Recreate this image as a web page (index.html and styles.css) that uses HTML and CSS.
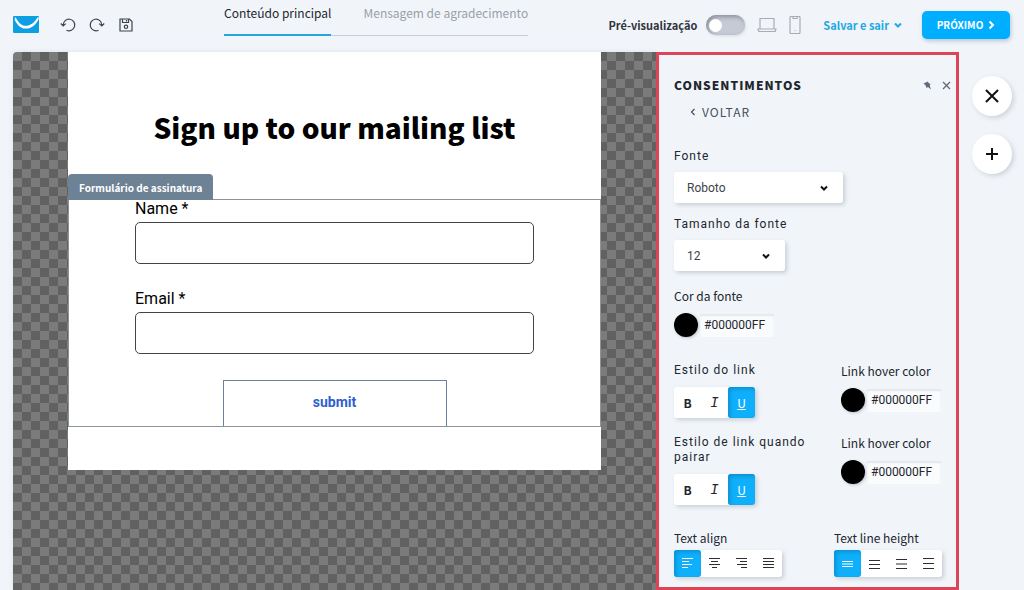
FILE: index.html
```
<!DOCTYPE html>
<html lang="pt-BR">
<head>
    <meta charset="UTF-8">
    <meta name="viewport" content="width=device-width, initial-scale=1.0">
    <title>Editor de formulário</title>
    <link rel="stylesheet" href="styles.css">
</head>
<body>

<header class="topbar">
    <a class="logo" href="#" aria-label="Início">
        <svg width="26" height="18" viewBox="0 0 26 18">
            <rect width="26" height="17" rx="1" fill="#0d9fe3"/>
            <path d="M2.500 1C6 8 9 9.800 13 9.800S21 7 25 1L26 2.500C22 10.500 17.500 12.600 13 12.600S5 10.500 1.500 3.500Z" fill="#fff"/>
        </svg>
    </a>
    <div class="tools">
        <button type="button" aria-label="Desfazer">
            <svg width="16" height="16" viewBox="0 0 16 16"><path d="M3.200 9V8A5.800 5.800 0 1 1 6.500 13.200M.8 6.500 3.200 9l2.600-2.400"/></svg>
        </button>
        <button type="button" aria-label="Refazer">
            <svg width="16" height="16" viewBox="0 0 16 16"><path d="M12.800 9V8A5.800 5.800 0 1 0 9.500 13.200M15.200 6.500 12.800 9l-2.600-2.400"/></svg>
        </button>
        <button type="button" aria-label="Salvar">
            <svg width="16" height="16" viewBox="0 0 16 16"><path d="M2 2h9.500L14 4.500V14H2ZM4.500 2v3.500h6V2M8.500 3v1.500"/><circle cx="8" cy="9.800" r="1.700"/></svg>
        </button>
    </div>
    <nav class="tabs">
        <a class="tab active" href="#">Conteúdo principal</a>
        <a class="tab" href="#">Mensagem de agradecimento</a>
    </nav>
    <div class="actions">
        <label class="preview-label" for="preview">Pré-visualização</label>
        <input class="switch" type="checkbox" id="preview">
        <button class="device" type="button" aria-label="Computador">
            <svg width="20" height="16" viewBox="0 0 20 16"><path d="M3 11.500V1.500h14v10M1 12h18l-.8 2.500H1.800Z"/></svg>
        </button>
        <button class="device" type="button" aria-label="Celular">
            <svg width="12" height="18" viewBox="0 0 12 18"><rect x="1" y=".5" width="10" height="17" rx="1"/><path d="M4 1v1.500h4V1M5.500 14.500h1"/></svg>
        </button>
        <button class="save-exit" type="button">Salvar e sair
            <svg width="8" height="6" viewBox="0 0 8 6"><path d="M1 1.500 4 4.500l3-3"/></svg>
        </button>
        <button class="next" type="button">PRÓXIMO
            <svg width="7" height="10" viewBox="0 0 7 10"><path d="M1.500 1.500 5 5 1.500 8.500"/></svg>
        </button>
    </div>
</header>

<main class="workspace">
    <section class="canvas">
        <div class="page">
            <h1>Sign up to our mailing list</h1>
            <div class="block">
                <span class="block-tag">Formulário de assinatura</span>
                <form class="signup">
                    <label for="name">Name *</label>
                    <input type="text" id="name">
                    <label for="email">Email *</label>
                    <input type="email" id="email">
                    <button type="submit">submit</button>
                </form>
            </div>
        </div>
    </section>

    <aside class="panel">
        <div class="panel-head">
            <h2>CONSENTIMENTOS</h2>
            <button type="button" aria-label="Fixar">
                <svg width="9" height="9" viewBox="0 0 9 9"><path d="M.5 2.500 5 .5l.5 1.500 2 1-.8 1.500 1.300 4-3-2.500-1.500 1-.8-2.500Z" fill="#5f6a7d"/></svg>
            </button>
            <button type="button" aria-label="Fechar">
                <svg width="9" height="9" viewBox="0 0 9 9"><path d="m1 1 7 7M8 1 1 8" stroke="#5f6a7d" stroke-width="1.300"/></svg>
            </button>
        </div>
        <button class="back" type="button">
            <svg width="6" height="8" viewBox="0 0 6 8"><path d="M4.500 1 1.500 4l3 3"/></svg>
            VOLTAR
        </button>

        <div class="field field-font">
            <label class="wide" for="fonte">Fonte</label>
            <div class="select select-lg">
                <select id="fonte"><option>Roboto</option><option>Lato</option></select>
                <svg width="8" height="6" viewBox="0 0 8 6"><path d="M1 1.500 4 4.500l3-3"/></svg>
            </div>
        </div>
        <div class="field field-size">
            <label class="wide" for="tamanho">Tamanho da fonte</label>
            <div class="select select-sm">
                <select id="tamanho"><option>12</option><option>14</option></select>
                <svg width="8" height="6" viewBox="0 0 8 6"><path d="M1 1.500 4 4.500l3-3"/></svg>
            </div>
        </div>
        <div class="field field-color">
            <label for="cor">Cor da fonte</label>
            <div class="color"><span class="swatch"></span><input type="text" id="cor" value="#000000FF"></div>
        </div>

        <div class="row">
            <div class="field">
                <span class="wide" id="estilo">Estilo do link</span>
                <div class="group" role="group" aria-labelledby="estilo">
                    <button type="button" class="bold">B</button>
                    <button type="button" class="italic">I</button>
                    <button type="button" class="underline on">U</button>
                </div>
            </div>
            <div class="field">
                <label for="hover1">Link hover color</label>
                <div class="color"><span class="swatch"></span><input type="text" id="hover1" value="#000000FF"></div>
            </div>
        </div>

        <div class="row row-hover">
            <div class="field">
                <span class="wide" id="estilo2">Estilo de link quando pairar</span>
                <div class="group" role="group" aria-labelledby="estilo2">
                    <button type="button" class="bold">B</button>
                    <button type="button" class="italic">I</button>
                    <button type="button" class="underline on">U</button>
                </div>
            </div>
            <div class="field">
                <label for="hover2">Link hover color</label>
                <div class="color"><span class="swatch"></span><input type="text" id="hover2" value="#000000FF"></div>
            </div>
        </div>

        <div class="row row-text">
            <div class="field">
                <span id="align">Text align</span>
                <div class="group" role="group" aria-labelledby="align">
                    <button type="button" class="on" aria-label="Esquerda"><svg width="11" height="11" viewBox="0 0 11 11"><path d="M0 .5h11M0 3.500h7M0 6.500h10M0 9.500h6"/></svg></button>
                    <button type="button" aria-label="Centro"><svg width="11" height="11" viewBox="0 0 11 11"><path d="M0 .5h11M2 3.500h7M0 6.500h11M3 9.500h5"/></svg></button>
                    <button type="button" aria-label="Direita"><svg width="11" height="11" viewBox="0 0 11 11"><path d="M0 .5h11M4 3.500h7M1 6.500h10M5 9.500h6"/></svg></button>
                    <button type="button" aria-label="Justificado"><svg width="11" height="11" viewBox="0 0 11 11"><path d="M0 .5h11M0 3.500h11M0 6.500h11M0 9.500h11"/></svg></button>
                </div>
            </div>
            <div class="field">
                <span id="line">Text line height</span>
                <div class="group" role="group" aria-labelledby="line">
                    <button type="button" class="on" aria-label="Simples"><svg width="11" height="11" viewBox="0 0 11 11"><path d="M0 3.500h11M0 6h11M0 8.500h11"/></svg></button>
                    <button type="button" aria-label="Pequena"><svg width="11" height="11" viewBox="0 0 11 11"><path d="M0 2.500h11M0 6.500h11M0 10.500h11"/></svg></button>
                    <button type="button" aria-label="Média"><svg width="11" height="11" viewBox="0 0 11 11"><path d="M0 1.500h11M0 6h11M0 10.500h11"/></svg></button>
                    <button type="button" aria-label="Grande"><svg width="11" height="11" viewBox="0 0 11 11"><path d="M0 .5h11M0 5.500h11M0 10.500h11"/></svg></button>
                </div>
            </div>
        </div>
    </aside>

    <div class="rail">
        <button type="button" aria-label="Fechar painel"><svg width="14" height="14" viewBox="0 0 14 14"><path d="m1 1 12 12M13 1 1 13"/></svg></button>
        <button type="button" aria-label="Adicionar"><svg width="14" height="14" viewBox="0 0 14 14"><path d="M7 1v12M1 7h12"/></svg></button>
    </div>
</main>

</body>
</html>
```
FILE: styles.css
```
* {
    box-sizing: border-box;
}
body {
    display: flex;
    flex-direction: column;
    height: 100vh;
    margin: 0;
    overflow: hidden;
    background-color: #f1f5fa;
    font-family: "Noto Sans CJK JP", "Open Sans", sans-serif;
    font-size: 12px;
    line-height: 16px;
    color: #22262d;
}
button {
    padding: 0;
    border: none;
    background: none;
    font: inherit;
    color: inherit;
    cursor: pointer;
}
a {
    color: inherit;
    text-decoration: none;
}
svg {
    display: block;
    fill: none;
    stroke: none;
}

/* barra superior */
.topbar {
    display: flex;
    align-items: center;
    flex: none;
    height: 52px;
    padding: 0 14px 2px 13px;
}
.tools {
    display: flex;
    gap: 13px;
    margin-left: 21px;
}
.tools svg {
    stroke: #3f444c;
    stroke-width: 1.2;
}
.tabs {
    display: flex;
    align-self: flex-start;
    margin-left: 90px;
    padding-top: 5px;
}
.tab {
    height: 31px;
    padding-left: 32px;
    border-bottom: 1px solid #c9ced6;
    color: #999fa8;
}
.tab.active {
    padding-left: 0;
    border-bottom: 2px solid #26a5dd;
    color: #22262d;
}
.actions {
    display: flex;
    align-items: center;
    margin-left: auto;
    white-space: nowrap;
}
.preview-label {
    font-size: 11px;
    font-weight: 700;
    color: #30343b;
}
.switch {
    appearance: none;
    display: flex;
    align-items: center;
    width: 39px;
    height: 20px;
    margin: 0 12px 0 9px;
    padding: 0 3px;
    border-radius: 10px;
    background-color: #c5cad5;
    box-shadow: inset 2px 2px 4px #8b909c, 1px 1px 3px #d5dae2;
}
.switch::before {
    content: "";
    width: 13px;
    height: 13px;
    border-radius: 50%;
    background-color: #fff;
}
.switch:checked {
    justify-content: flex-end;
    background-color: #00aff8;
}
.device {
    margin-right: 12px;
}
.device svg {
    stroke: #a9adb3;
    stroke-width: 1.2;
}
.save-exit,
.next {
    display: flex;
    align-items: center;
    gap: 5px;
}
.save-exit {
    margin: 0 20px 0 10px;
    font-size: 11px;
    font-weight: 700;
    color: #25a8e2;
}
.save-exit svg {
    stroke: #25a8e2;
    stroke-width: 2;
}
.next {
    justify-content: center;
    width: 88px;
    height: 28px;
    border-radius: 5px;
    background-color: #00aeff;
    box-shadow: 1px 2px 4px #b4c6d5;
    font-size: 10px;
    font-weight: 700;
    color: #fff;
}
.next svg {
    stroke: #fff;
    stroke-width: 2;
}

.workspace {
    display: flex;
    flex: 1;
    min-height: 0;
}

/* area de edição */
.canvas {
    flex: 1;
    margin-left: 13px;
    padding: 0 55px;
    border-top-left-radius: 4px;
    background: repeating-conic-gradient(#616161 0 25%, #7b7b7b 0 50%) 0 0 / 18px 18px;
    box-shadow: 0 0 5px #dce2ea;
}
.page {
    padding-bottom: 43px;
    background-color: #fff;
}
.page h1 {
    margin: 0;
    padding: 55px 0 52px;
    text-align: center;
    font-size: 28px;
    line-height: 40px;
    font-weight: 900;
    color: #000;
}
.block {
    position: relative;
    border: 1px solid #8b939b;
}
.block-tag {
    position: absolute;
    left: -1px;
    bottom: 100%;
    padding: 6px 11px 4px;
    border-radius: 4px 4px 0 0;
    background-color: #6d8295;
    font-size: 10px;
    font-weight: 700;
    color: #fff;
    white-space: nowrap;
}
.signup {
    display: flex;
    flex-direction: column;
    padding: 0 66px;
    font-family: Roboto, sans-serif;
    color: #000;
}
.signup label {
    margin-bottom: 4px;
    font-size: 16px;
    line-height: 18px;
}
.signup input {
    height: 42px;
    margin-bottom: 26px;
    padding: 0 12px;
    border: 1px solid #444;
    border-radius: 5px;
    font: inherit;
}
.signup button {
    align-self: center;
    width: 224px;
    height: 46px;
    padding-bottom: 3px;
    border: 1px solid #6b83a3;
    border-bottom: none;
    font-size: 14px;
    font-weight: 700;
    color: #2e5fd0;
}

/* painel de opções */
.panel {
    flex: none;
    width: 303px;
    padding: 22px 5px 0 15px;
    border: 3px solid #dc4458;
    overflow: hidden;
}
.panel-head {
    display: flex;
    align-items: center;
    gap: 10px;
}
.panel-head h2 {
    flex: 1;
    margin: 0;
    font-size: 12px;
    line-height: 16px;
    font-weight: 900;
    letter-spacing: 1px;
}
.back {
    display: flex;
    align-items: center;
    gap: 6px;
    margin: 11px 0 0 16px;
    letter-spacing: 1px;
    color: #4a4f57;
}
.back svg {
    stroke: #4a4f57;
    stroke-width: 1.2;
}
.field {
    display: flex;
    flex-direction: column;
    align-items: flex-start;
}
.wide {
    font-family: Roboto, sans-serif;
    line-height: 15px;
    letter-spacing: 1px;
}
.field-font {
    margin-top: 29px;
}
.field-size {
    margin-top: 14px;
}
.field-color {
    margin-top: 17px;
}
.select {
    display: grid;
    align-items: center;
    margin-top: 8px;
    border-radius: 3px;
    background-color: #fff;
    box-shadow: 2px 2px 4px #c8ced6;
}
.select-lg {
    width: 169px;
}
.select-sm {
    width: 111px;
}
.select select,
.select svg {
    grid-area: 1 / 1;
}
.select select {
    appearance: none;
    height: 31px;
    padding: 0 13px;
    border: none;
    background: none;
    font-family: Roboto, sans-serif;
    font-size: 12px;
    color: #3e434b;
}
.select svg {
    justify-self: end;
    margin-right: 15px;
    stroke: #111;
    stroke-width: 2;
    pointer-events: none;
}
.color {
    display: flex;
    align-items: center;
    margin-top: 9px;
}
.swatch {
    width: 24px;
    height: 24px;
    border-radius: 50%;
    background-color: #000;
    box-shadow: 1px 1px 3px #b9bfc8;
}
.color input {
    width: 74px;
    height: 23px;
    margin-left: 2px;
    padding: 0 4px;
    border: none;
    background-color: #fafbfd;
    box-shadow: inset 0 2px 2px #e3e6eb;
    font-family: Roboto, sans-serif;
    font-size: 12px;
    color: #22262d;
}
.row {
    display: grid;
    grid-template-columns: 1fr 110px;
    margin-top: 26px;
}
.row-hover {
    margin-top: 17px;
}
.row-text {
    grid-template-columns: 1fr 117px;
    margin-top: 25px;
}
.group {
    display: flex;
    margin-top: 9px;
    border-radius: 3px;
    background-color: #fff;
    box-shadow: 2px 2px 4px #c8ced6;
}
.group button {
    display: grid;
    place-items: center;
    width: 27px;
    height: 31px;
}
.row-text .group {
    margin-top: 4px;
}
.row-text .group button {
    height: 27px;
}
.group svg {
    stroke: #2a2e35;
}
.group .on {
    border-radius: 3px;
    background-color: #0fb0fb;
    box-shadow: inset 2px 2px 4px #0d8fd0;
    color: #fff;
}
.group .on svg {
    stroke: #fff;
}
.bold {
    font-weight: 700;
}
.italic {
    font-family: "Liberation Mono", monospace;
    font-size: 14px;
    font-style: italic;
}
.underline {
    text-decoration: underline;
}

/* botões laterais */
.rail {
    display: flex;
    flex-direction: column;
    align-items: center;
    gap: 18px;
    width: 65px;
    padding-top: 24px;
}
.rail button {
    display: grid;
    place-items: center;
    width: 40px;
    height: 40px;
    border-radius: 50%;
    background-color: #fff;
    box-shadow: 2px 2px 5px #cdd3db;
}
.rail svg {
    stroke: #111;
    stroke-width: 2;
}
```
